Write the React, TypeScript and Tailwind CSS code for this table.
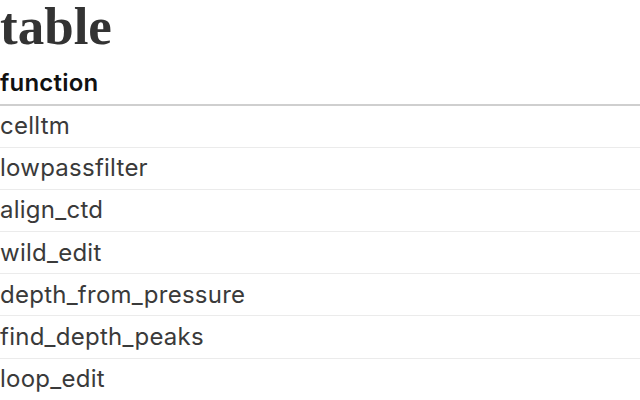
export default function App() {
  const rows = [
    "celltm",
    "lowpassfilter",
    "align_ctd",
    "wild_edit",
    "depth_from_pressure",
    "find_depth_peaks",
    "loop_edit",
  ];
  return (
    <div className="bg-white w-[640px] h-[400px] overflow-hidden">
      <h1 className="text-[53px] leading-[52px] font-bold text-[#333] font-['Liberation_Serif',serif]">
        table
      </h1>
      <table className="w-full mt-[11px] border-collapse font-['Inter',sans-serif]">
        <thead>
          <tr className="border-b-2 border-[#cfcfcf]">
            <th className="text-left text-[24px] tracking-[0.2px] font-semibold text-[#111] h-[42px] p-0 pb-[1px]">function</th>
          </tr>
        </thead>
        <tbody>
          {rows.map((r) => (
            <tr key={r} className="border-b border-[#ebebeb]">
              <td className="text-[24px] tracking-[0.25px] text-[#3a3a3a] h-[42.2px] p-0">{r}</td>
            </tr>
          ))}
        </tbody>
      </table>
    </div>
  );
}
